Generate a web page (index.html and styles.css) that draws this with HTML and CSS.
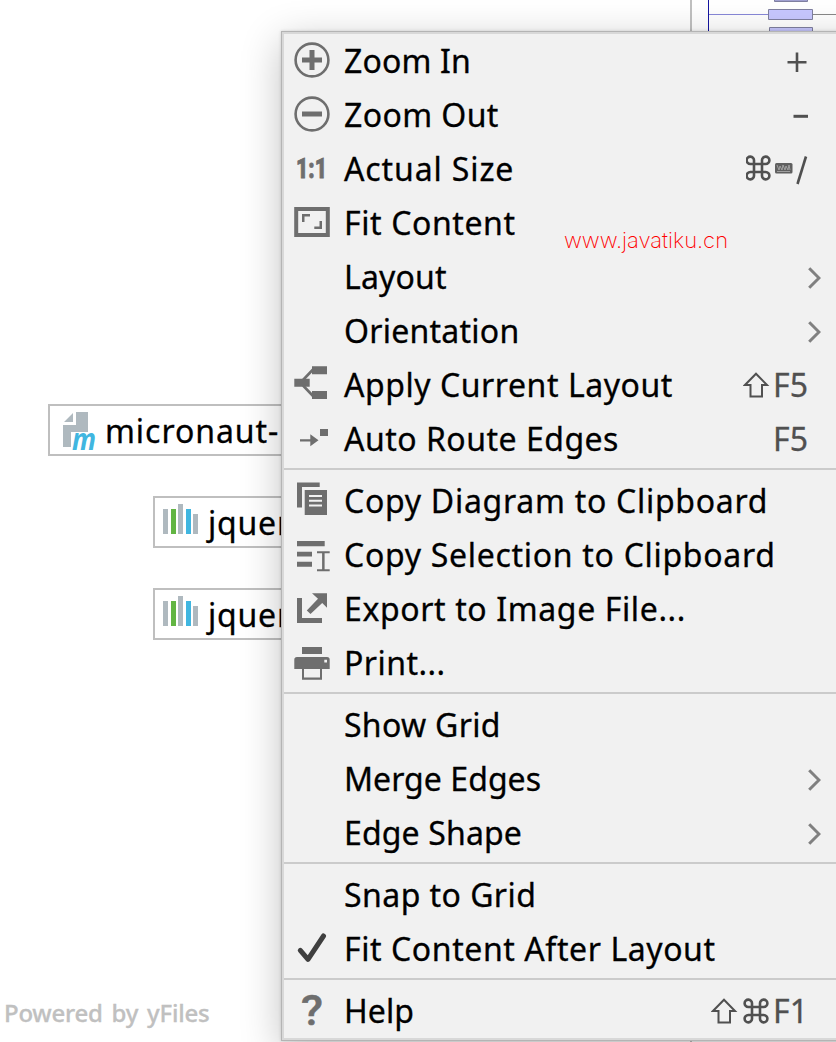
FILE: index.html
```html
<!DOCTYPE html>
<html lang="en">
<head>
<meta charset="utf-8">
<title>Diagram</title>
<link rel="stylesheet" href="styles.css">
</head>
<body>
<svg class="defs" width="0" height="0" aria-hidden="true">
  <defs>
    <g id="bars"><path fill="#afb9bf" d="M0 5h5v25H0zM15 0h5v30h-5zM30 10h5v20h-5z"/><path fill="#62b543" d="M8 5h5v25H8z"/><path fill="#40b6e0" d="M23 5h5v25h-5z"/></g>
    <path id="cmd" d="M8.500 8.500h8v8h-8zM8.500 8.500V5A3.700 3.700 0 1 0 4.800 8.500zM16.500 8.500V5A3.700 3.700 0 1 1 20.200 8.500zM8.500 16.500V20A3.700 3.700 0 1 1 4.800 16.500zM16.500 16.500V20A3.700 3.700 0 1 0 20.200 16.500z" fill="none" stroke="#505050" stroke-width="2.600"/>
    <path id="shift" d="M13 1.800L24 13H19V24.500H7.500V13H2z" fill="none" stroke="#505050" stroke-width="2"/>
    <path id="chev" d="M1.200 1.200L11 11L1.200 20.800" fill="none" stroke="#808080" stroke-width="3"/>
  </defs>
</svg>
<div class="canvas">
  <svg class="overview" width="146" height="1042" viewBox="690 0 146 1042">
    <path fill="#c0c0c0" d="M690 0h2v1042h-2z"/>
    <path fill="#1414a0" d="M708 0h1v40h-1z"/>
    <path fill="#8888d8" d="M709 14h60v1h-60z"/><path fill="#888" d="M812 14h24v1h-24z"/>
    <g fill="#c8c8ff" stroke="#8080a0"><path d="M774.500 -4.500h33v6h-33z" fill="#a0a0d0"/><path d="M768.500 9.500h44v10h-44z"/><path d="M769.500 27.500h43v10h-43z"/></g>
  </svg>
  <div class="node node-root">
    <svg class="node-icon" width="35" height="40" viewBox="0 0 35 40"><path fill="#afb9bf" d="M1 10L10 1v9zM13 0h12v20H8v15H0V13h13z"/><text class="maven" x="9" y="38" textLength="24" lengthAdjust="spacingAndGlyphs">m</text></svg>
    <span class="node-text root-text">micronaut-</span>
  </div>
  <div class="node node-a"><svg class="node-icon" width="35" height="30"><use href="#bars"/></svg><span class="node-text">jquery</span></div>
  <div class="node node-b"><svg class="node-icon" width="35" height="30"><use href="#bars"/></svg><span class="node-text">jquery</span></div>
  <div class="powered">Powered by yFiles</div>

  <div class="menu">
    <div class="item"><svg class="icon" viewBox="0 0 36 36"><circle cx="18" cy="18" r="16.400" class="ring"/><path d="M8 15.500h7.500V8h5v7.500H28v5h-7.500V28h-5v-7.500H8z"/></svg><span class="label l1">Zoom In</span><svg class="sc sc-plus" width="20" height="20"><path fill="#505050" d="M.5 9h8.200V.5h2.600V9h8.200v2.500h-8.200V20H8.700v-8.500H.5z"/></svg></div>
    <div class="item"><svg class="icon" viewBox="0 0 36 36"><circle cx="18" cy="18" r="16.400" class="ring"/><path d="M8 15.500h20v5H8z"/></svg><span class="label l2">Zoom Out</span><svg class="sc" width="15" height="4"><path fill="#505050" d="M.5 .8H15v3H.5z"/></svg></div>
    <div class="item"><svg class="icon" viewBox="0 0 36 36"><text class="one" x="2" y="28" textLength="31" lengthAdjust="spacingAndGlyphs">1:1</text></svg><span class="label l3">Actual Size</span><svg class="sc slash-sc" width="62" height="30" viewBox="746 155 62 30"><use href="#cmd" x="745.500" y="155.500"/><rect x="775" y="163" width="17.500" height="10.500" rx="1.500" fill="#606060"/><path d="M777 165l2 5 1-4 2 4 1-5 2 5 1-4 2 4 1-5 1 5M777 171.500h13" fill="none" stroke="#b0b0b0" stroke-width=".8"/><path d="M797.500 184L806 156.500" stroke="#505050" stroke-width="2.600"/></svg></div>
    <div class="item"><svg class="icon" viewBox="0 0 36 36"><path class="line4" d="M2.200 5h31.600v26H2.200z"/><path d="M8 10h8v2.500h-5.500V18H8zM28 25h-7.700v-2.500h5.200V17H28z"/></svg><span class="label l4">Fit Content</span></div>
    <div class="item"><i class="icon"></i><span class="label l5">Layout</span><svg class="arrow"><use href="#chev"/></svg></div>
    <div class="item"><i class="icon"></i><span class="label l6">Orientation</span><svg class="arrow"><use href="#chev"/></svg></div>
    <div class="item"><svg class="icon" viewBox="0 0 36 36"><path d="M18 .3h15v8H18zM.3 12.700h15.400v8H.3zM18 25h15v8H18z"/><path class="line2" d="M9 14L19 3.500M9 19.500L19 30"/></svg><span class="label l7">Apply Current Layout</span><svg class="sc sc-gap" width="27" height="26"><use href="#shift"/></svg><span class="keys">F5</span></div>
    <div class="item"><svg class="icon" viewBox="0 0 36 36"><path d="M6 19.200h10.300v-5L24.500 20.300l-8.200 6v-4.900H6zM26 9h8v7h-8z"/></svg><span class="label l8">Auto Route Edges</span><span class="keys">F5</span></div>
    <div class="sep"></div>
    <div class="item"><svg class="icon" viewBox="0 0 36 36"><path d="M3 .5h22.700V5H8v20.500H3z"/><path d="M10.700 8H33v25H10.700z"/><path fill="#f1f1f1" d="M15 13h13v2H15zM15 17.700h13v2H15zM15 22.500h13v2H15z"/></svg><span class="label l9">Copy Diagram to Clipboard</span></div>
    <div class="item"><svg class="icon" viewBox="0 0 36 36"><path d="M3 5h27.700v5.300H3zM3 15.700h15v4.800H3zM3 25.700h15v5H3zM23 15.300h12.700v2h-5.100v16h5.100v2H23v-2h5.100v-16H23z"/></svg><span class="label l10">Copy Selection to Clipboard</span></div>
    <div class="item"><svg class="icon" viewBox="0 0 36 36"><path d="M3 8h5v20h20v5H3zM18 3.300h15v14.400l-4.800-4.800-11.700 11-3.700-3.500L24 8.700z"/></svg><span class="label l11">Export to Image File...</span></div>
    <div class="item"><svg class="icon" viewBox="0 0 36 36"><path d="M8 3h20v7H8zM3 13h30a2.700 2.700 0 0 1 2.700 2.700V25H.3v-9.300A2.700 2.700 0 0 1 3 13z"/><path fill="#f1f1f1" d="M10 25h16v8.500H10zM30.300 15.700H33v2.700h-2.700z"/><path d="M8 25h2v8.500h16V25h2v10.700H8z"/></svg><span class="label l12">Print...</span></div>
    <div class="sep"></div>
    <div class="item"><i class="icon"></i><span class="label l13">Show Grid</span></div>
    <div class="item"><i class="icon"></i><span class="label l14">Merge Edges</span><svg class="arrow"><use href="#chev"/></svg></div>
    <div class="item"><i class="icon"></i><span class="label l15">Edge Shape</span><svg class="arrow"><use href="#chev"/></svg></div>
    <div class="sep"></div>
    <div class="item"><i class="icon"></i><span class="label l16">Snap to Grid</span></div>
    <div class="item"><svg class="icon" viewBox="0 0 36 36"><path class="check" d="M6.300 20.300L14 29.300L29.500 6"/></svg><span class="label l17">Fit Content After Layout</span></div>
    <div class="sep"></div>
    <div class="item"><svg class="icon" viewBox="0 0 36 36"><text class="help" x="7" y="33" textLength="22" lengthAdjust="spacingAndGlyphs">?</text></svg><span class="label l18">Help</span><svg class="sc sc-gap" width="59" height="26"><use href="#shift"/><use href="#cmd" x="32.500" y=".5"/></svg><span class="keys">F1</span></div>
  </div>
  <div class="watermark">www.javatiku.cn</div>
</div>
</body>
</html>
```
FILE: styles.css
```css
* { box-sizing: border-box; }
body { margin: 0; background: #fff; font-family: "Noto Sans", "Open Sans", sans-serif; }
svg { display: block; }
.defs { position: absolute; }
.canvas { position: relative; width: 836px; height: 1042px; overflow: hidden; background: #fff; }
.overview { position: absolute; left: 690px; top: 0; }
.node { position: absolute; display: flex; height: 52px; width: 300px; border: 2px solid #bfbfbf; }
.node-root { left: 48px; top: 404px; }
.node-a { left: 153px; top: 496px; }
.node-b { left: 153px; top: 588px; }
.node-icon { flex: none; margin: 6px 0 0 8px; overflow: visible; }
.node-root .node-icon { margin-left: 13px; }
.node-text { margin-left: 10px; font-size: 32px; line-height: 49px; letter-spacing: 0.8px; color: #000; white-space: nowrap; -webkit-text-stroke: 0.3px #000; }
.node-root .node-text { margin-left: 7px; letter-spacing: 0.95px; }
.maven { font: italic 700 30px "Open Sans", sans-serif; fill: #40b6e0; }
.powered { position: absolute; left: 4px; top: 996px; font-size: 24px; line-height: 34px; font-weight: 500; letter-spacing: -0.25px; word-spacing: 3px; color: #c0c0c0; white-space: nowrap; -webkit-text-stroke: 0.3px #c0c0c0; }
.menu { position: absolute; left: 281px; top: 31px; width: 640px; height: 1010px; padding: 2px; border: 1px solid #b4b4b4; background: #f1f1f1; background-clip: padding-box; box-shadow: inset 0 0 0 2px #d8d8d8, 0 10px 38px rgba(0,0,0,.24), 0 0 3px rgba(0,0,0,.15); }
.item { display: flex; height: 54px; width: 552px; padding-left: 10px; padding-right: 28px; align-items: center; }
.icon { flex: none; width: 36px; height: 36px; margin: -2px 14px 0 0; fill: #6e6e6e; overflow: visible; }
.ring { fill: none; stroke: #6e6e6e; stroke-width: 2.6; }
.line4 { fill: none; stroke: #6e6e6e; stroke-width: 4; }
.line2 { fill: none; stroke: #6e6e6e; stroke-width: 2.6; }
.check { fill: none; stroke: #3f3f3f; stroke-width: 5; stroke-linecap: round; stroke-linejoin: round; }
.one { font: 900 28px Roboto, sans-serif; stroke: #6e6e6e; stroke-width: 0.8; }
.help { font: 500 42px Roboto, sans-serif; stroke: #6e6e6e; stroke-width: 0.5; }
.label { flex: 1; margin-top: -1px; font-size: 32px; line-height: 54px; color: #000; white-space: nowrap; -webkit-text-stroke: 0.3px #000; }
.l1 { letter-spacing: 0.15px; }
.l2 { letter-spacing: 0.4px; }
.l3 { letter-spacing: 0.88px; }
.l4 { letter-spacing: 0.6px; }
.l5 { letter-spacing: 0.15px; }
.l6 { letter-spacing: 0.25px; }
.l7 { letter-spacing: 0.55px; }
.l8 { letter-spacing: 0.5px; }
.l9 { letter-spacing: 0.72px; }
.l10 { letter-spacing: 0.7px; }
.l11 { letter-spacing: 0.62px; }
.l12 { letter-spacing: 0.45px; }
.l13 { letter-spacing: 0.3px; }
.l14 { letter-spacing: 0.05px; }
.l15 { letter-spacing: 0.15px; }
.l16 { letter-spacing: 0.45px; }
.l17 { letter-spacing: 0.58px; }
.l18 { letter-spacing: 0.1px; }
.sc { flex: none; margin-top: 2px; }
.sc-plus { margin-right: 1px; }
.sc-gap { margin-top: -1px; margin-right: 3px; }
.keys { margin-top: -1px; font-size: 32px; line-height: 54px; color: #505050; -webkit-text-stroke: 0.3px #505050; }
.arrow { width: 13px; height: 22px; margin-right: -13px; margin-top: 1px; }
.sep { height: 8px; padding-top: 2px; }
.sep::before { content: ""; display: block; height: 2px; background: #cbcbcb; }
.watermark { position: absolute; left: 564px; top: 226px; font: 200 22px/28px Inter, sans-serif; color: #f00; white-space: nowrap; }
```
